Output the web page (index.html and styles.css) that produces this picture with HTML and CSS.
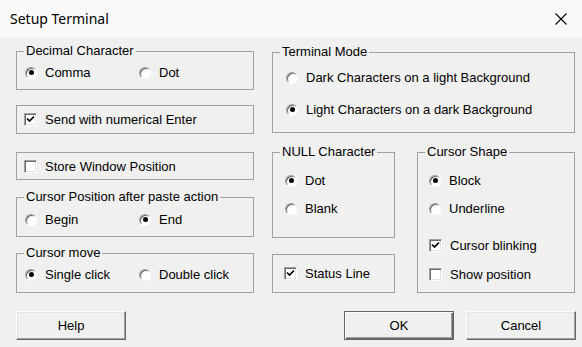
FILE: index.html
```html
<!DOCTYPE html>
<html lang="en">
<head>
    <meta charset="UTF-8">
    <title>Setup Terminal</title>
    <link rel="stylesheet" href="styles.css">
</head>
<body>
    <div class="titlebar">
        <span class="title">Setup Terminal</span>
        <svg class="close" width="12" height="12" viewBox="0 0 12 12">
            <path d="M0.5 0.5 L11.5 11.5 M11.5 0.5 L0.5 11.5" stroke="#000" stroke-width="1.1" fill="none"/>
        </svg>
    </div>

    <div class="dialog">
        <div class="columns">
            <div class="col-left">
                <fieldset class="group decimal">
                    <legend>Decimal Character</legend>
                    <div class="row pair">
                        <label class="opt"><span class="radio on"></span>Comma</label>
                        <label class="opt"><span class="radio"></span>Dot</label>
                    </div>
                </fieldset>

                <div class="box send">
                    <label class="opt"><span class="check on"><svg width="9" height="9" viewBox="0 0 9 9"><path d="M1 3.5 L3.5 6 L8 1.5" stroke="#000" stroke-width="1.7" fill="none"/></svg></span>Send with numerical Enter</label>
                </div>

                <div class="box store">
                    <label class="opt"><span class="check"></span>Store Window Position</label>
                </div>

                <fieldset class="group paste">
                    <legend>Cursor Position after paste action</legend>
                    <div class="row pair">
                        <label class="opt"><span class="radio"></span>Begin</label>
                        <label class="opt"><span class="radio on"></span>End</label>
                    </div>
                </fieldset>

                <fieldset class="group move">
                    <legend>Cursor move</legend>
                    <div class="row pair">
                        <label class="opt"><span class="radio on"></span>Single click</label>
                        <label class="opt"><span class="radio"></span>Double click</label>
                    </div>
                </fieldset>
            </div>

            <div class="col-right">
                <fieldset class="group terminal">
                    <legend>Terminal Mode</legend>
                    <div class="row"><label class="opt"><span class="radio"></span>Dark Characters on a light Background</label></div>
                    <div class="row second"><label class="opt"><span class="radio on"></span>Light Characters on a dark Background</label></div>
                </fieldset>

                <div class="subrow">
                    <div class="subcol">
                        <fieldset class="group null">
                            <legend>NULL Character</legend>
                            <div class="row"><label class="opt"><span class="radio on"></span>Dot</label></div>
                            <div class="row second"><label class="opt"><span class="radio"></span>Blank</label></div>
                        </fieldset>
                        <div class="box status">
                            <label class="opt"><span class="check on"><svg width="9" height="9" viewBox="0 0 9 9"><path d="M1 3.5 L3.5 6 L8 1.5" stroke="#000" stroke-width="1.7" fill="none"/></svg></span>Status Line</label>
                        </div>
                    </div>

                    <fieldset class="group shape">
                        <legend>Cursor Shape</legend>
                        <div class="row"><label class="opt"><span class="radio on"></span>Block</label></div>
                        <div class="row second"><label class="opt"><span class="radio"></span>Underline</label></div>
                        <div class="row third"><label class="opt"><span class="check on"><svg width="9" height="9" viewBox="0 0 9 9"><path d="M1 3.5 L3.5 6 L8 1.5" stroke="#000" stroke-width="1.7" fill="none"/></svg></span>Cursor blinking</label></div>
                        <div class="row fourth"><label class="opt"><span class="check"></span>Show position</label></div>
                    </fieldset>
                </div>
            </div>
        </div>

        <div class="buttons">
            <button class="btn">Help</button>
            <div class="btn-group">
                <button class="btn default">OK</button>
                <button class="btn">Cancel</button>
            </div>
        </div>
    </div>
</body>
</html>
```

FILE: styles.css
```css
* {
    box-sizing: border-box;
}

body {
    margin: 0;
    width: 582px;
    height: 347px;
    background-color: #f0f0f0;
    font-family: "Liberation Sans", Arial, sans-serif;
    font-size: 13px;
    color: #000;
    overflow: hidden;
}

.titlebar {
    height: 37px;
    background-color: #f9f9f9;
    display: flex;
    align-items: center;
    justify-content: space-between;
    padding: 0 15px 0 10px;
}

.title {
    font-family: "Noto Sans", sans-serif;
    font-size: 14px;
    margin-top: -1px;
}

.close {
    display: block;
}

.dialog {
    padding-left: 16px;
}

.columns {
    display: flex;
    gap: 18px;
}

.col-left {
    width: 238px;
}

.col-right {
    width: 303px;
}

/* group boxes */
.group {
    margin: 0;
    padding: 0;
    border: 1px solid #a0a0a0;
    min-width: 0;
}

.group legend {
    margin-left: 7px;
    padding: 0 2px;
    line-height: 14px;
}

.box {
    border: 1px solid #a0a0a0;
    display: flex;
    align-items: center;
}

.row {
    display: flex;
    align-items: center;
    height: 19px;
}

.opt {
    display: flex;
    align-items: center;
    white-space: nowrap;
}

.pair .opt {
    width: 116px;
}

/* radio buttons */
.radio {
    width: 12px;
    height: 12px;
    border-radius: 50%;
    border: 1px solid;
    border-color: #a0a0a0 #fff #fff #a0a0a0;
    background: #fff;
    box-shadow: inset 1px 1px 0 #696969;
    margin-right: 8px;
    display: flex;
    align-items: center;
    justify-content: center;
    flex: none;
}

.radio.on::after {
    content: "";
    width: 5px;
    height: 5px;
    border-radius: 50%;
    background: #000;
}

/* check boxes */
.check {
    width: 13px;
    height: 13px;
    border: 1px solid;
    border-color: #a0a0a0 #fff #fff #a0a0a0;
    background: #fff;
    box-shadow: inset 1px 1px 0 #696969, inset -1px -1px 0 #e3e3e3;
    margin-right: 8px;
    display: flex;
    align-items: center;
    justify-content: center;
    flex: none;
}

.check svg {
    display: block;
}

/* left column */
.decimal {
    margin-top: 7px;
    padding: 5px 0 7px;
}

.decimal .row,
.paste .row,
.move .row {
    padding-left: 8px;
}

.send {
    margin-top: 15px;
    height: 29px;
    padding-left: 7px;
}

.store {
    margin-top: 18px;
    height: 28px;
    padding-left: 7px;
}

.paste {
    margin-top: 10px;
    padding: 6px 0 7px;
}

.move {
    margin-top: 9px;
    padding: 5px 0 8px;
}

/* right column */
.terminal {
    margin-top: 8px;
    padding: 9px 0 13px;
}

.terminal .row {
    padding-left: 13px;
}

.terminal .second {
    margin-top: 13px;
}

.subrow {
    margin-top: 12px;
    display: flex;
    gap: 22px;
}

.subcol {
    width: 123px;
}

.null {
    padding: 12px 0 19px;
}

.null .row {
    padding-left: 12px;
}

.null .second {
    margin-top: 9px;
}

.status {
    margin-top: 16px;
    height: 39px;
    padding-left: 11px;
}

.shape {
    width: 158px;
    padding: 12px 0 8px;
}

.shape .row {
    padding-left: 11px;
}

.shape .second {
    margin-top: 9px;
}

.shape .third {
    margin-top: 18px;
}

.shape .fourth {
    margin-top: 10px;
}

/* buttons */
.buttons {
    margin-top: 18px;
    width: 560px;
    display: flex;
    justify-content: space-between;
}

.btn-group {
    display: flex;
    gap: 12px;
}

.btn {
    width: 110px;
    height: 29px;
    padding: 0;
    font-family: "Liberation Sans", Arial, sans-serif;
    font-size: 13px;
    color: #000;
    background: #f0f0f0;
    border: 1px solid;
    border-color: #fff #696969 #696969 #fff;
    box-shadow: inset -1px -1px 0 #a0a0a0, inset 1px 1px 0 #e3e3e3;
}

.btn.default {
    border-color: #646464;
    box-shadow: inset 1px 1px 0 #fff, inset -1px -1px 0 #696969, inset -2px -2px 0 #a0a0a0;
}
```
